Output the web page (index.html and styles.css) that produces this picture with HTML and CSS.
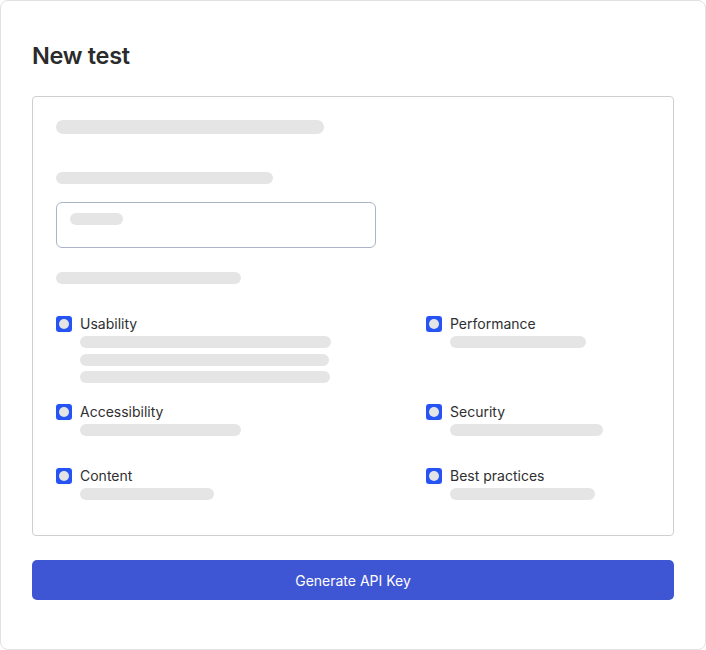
FILE: index.html
```html
<!DOCTYPE html>
<html>
<head>
<meta charset="utf-8">
<link rel="stylesheet" href="styles.css">
</head>
<body>
<div class="card">
  <h1 class="title">New test</h1>
  <div class="panel">
    <div class="sk sk-head" style="width:268px"></div>
    <div class="sk sk-label" style="width:217px"></div>
    <div class="input"><div class="sk sk-ph" style="width:53px"></div></div>
    <div class="sk sk-label2" style="width:185px"></div>
    <div class="checks">
      <div class="item">
        <div class="row"><span class="cb"></span><span class="lbl">Usability</span></div>
        <div class="bars">
          <div class="sk" style="width:251px"></div>
          <div class="sk" style="width:249px"></div>
          <div class="sk" style="width:250px"></div>
        </div>
      </div>
      <div class="item">
        <div class="row"><span class="cb"></span><span class="lbl">Performance</span></div>
        <div class="bars"><div class="sk" style="width:136px"></div></div>
      </div>
      <div class="item">
        <div class="row"><span class="cb"></span><span class="lbl">Accessibility</span></div>
        <div class="bars"><div class="sk" style="width:161px"></div></div>
      </div>
      <div class="item">
        <div class="row"><span class="cb"></span><span class="lbl">Security</span></div>
        <div class="bars"><div class="sk" style="width:153px"></div></div>
      </div>
      <div class="item">
        <div class="row"><span class="cb"></span><span class="lbl">Content</span></div>
        <div class="bars"><div class="sk" style="width:134px"></div></div>
      </div>
      <div class="item">
        <div class="row"><span class="cb"></span><span class="lbl">Best practices</span></div>
        <div class="bars"><div class="sk" style="width:145px"></div></div>
      </div>
    </div>
  </div>
  <button class="btn">Generate API Key</button>
</div>
</body>
</html>
```
FILE: styles.css
```css
* { box-sizing: border-box; }
html, body { margin: 0; padding: 0; background: #fff; }
body { font-family: Inter, "Noto Sans", sans-serif; color: #2d2d2d; }
.card {
  width: 706px;
  height: 650px;
  border: 1px solid #e2e2e2;
  border-radius: 8px;
  padding: 40px 31px 49px;
  display: flex;
  flex-direction: column;
}
.title {
  margin: 0 0 25px;
  font-size: 23.5px;
  line-height: 30px;
  font-weight: 600;
  color: #2b2b2b;
  letter-spacing: -0.3px;
}
.panel {
  border: 1px solid #cfcfcf;
  border-radius: 4px;
  padding: 23px 23px 35px;
  display: flex;
  flex-direction: column;
  align-items: flex-start;
}
.sk {
  height: 12px;
  border-radius: 6px;
  background: #e5e5e5;
}
.sk-head { height: 14px; border-radius: 7px; margin-bottom: 38px; }
.sk-label { margin-bottom: 18px; }
.input {
  width: 320px;
  height: 46px;
  border: 1px solid #aab4c6;
  border-radius: 6px;
  padding: 10px 13px;
  margin-bottom: 24px;
}
.sk-label2 { margin-bottom: 30px; }
.checks {
  width: 100%;
  display: grid;
  grid-template-columns: 370px 1fr;
  grid-template-rows: 88px 64px auto;
}
.row {
  display: flex;
  align-items: center;
  gap: 8px;
  height: 20px;
}
.cb {
  width: 16px;
  height: 16px;
  border-radius: 3px;
  background: #2553f4;
  display: flex;
  align-items: center;
  justify-content: center;
}
.cb::after {
  content: "";
  width: 10px;
  height: 10px;
  border-radius: 50%;
  background: #e4e4e4;
}
.lbl { font-size: 14px; line-height: 20px; color: #2f2f2f; }
.bars {
  margin-top: 2px;
  padding-left: 24px;
  display: flex;
  flex-direction: column;
  gap: 5.5px;
}
.btn {
  margin-top: 24px;
  height: 40px;
  border: none;
  border-radius: 5px;
  background: #3f56d4;
  color: #fff;
  font-family: Inter, "Noto Sans", sans-serif;
  font-size: 14px;
  width: 100%;
}
```
